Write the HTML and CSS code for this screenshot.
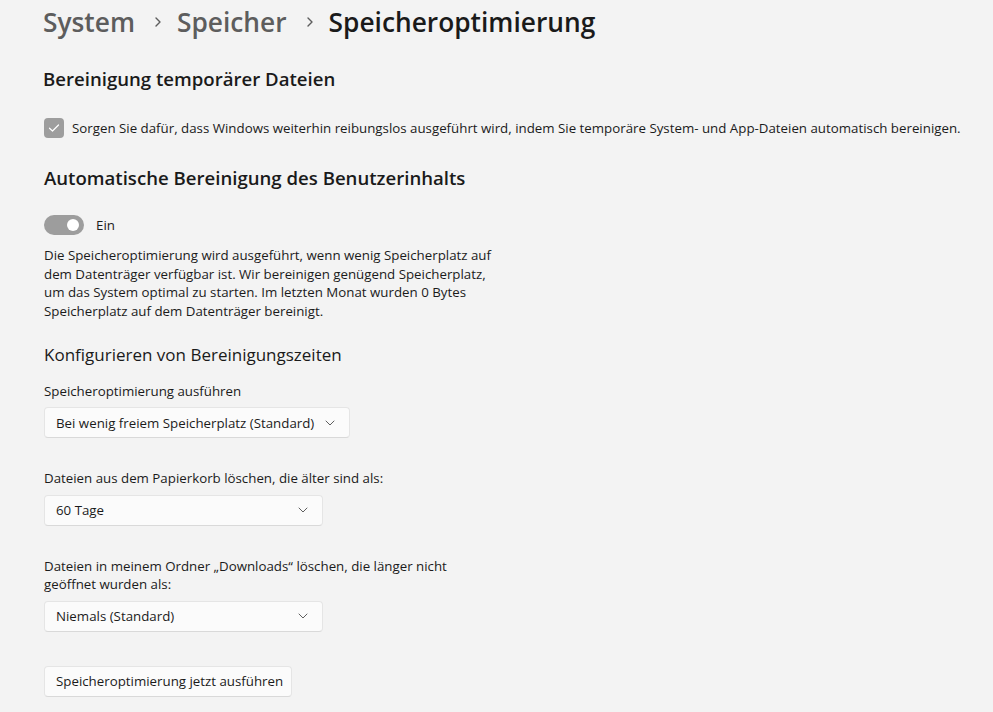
FILE: index.html
```html
<!DOCTYPE html>
<html lang="de">
<head>
<meta charset="utf-8">
<link rel="stylesheet" href="styles.css">
</head>
<body>
<div class="page">
  <h1 class="crumbs">
    <span class="crumb-muted">System</span>
    <svg class="sep" width="10" height="12" viewBox="0 0 10 12"><path d="M3 2 L7 6 L3 10" fill="none" stroke="#5d5d5d" stroke-width="1.4" stroke-linecap="round" stroke-linejoin="round"/></svg>
    <span class="crumb-muted">Speicher</span>
    <svg class="sep" width="10" height="12" viewBox="0 0 10 12"><path d="M3 2 L7 6 L3 10" fill="none" stroke="#5d5d5d" stroke-width="1.4" stroke-linecap="round" stroke-linejoin="round"/></svg>
    <span class="crumb-current">Speicheroptimierung</span>
  </h1>

  <h2 class="section-title first">Bereinigung temporärer Dateien</h2>
  <label class="check-row">
    <span class="checkbox"><svg width="12" height="10" viewBox="0 0 12 10"><path d="M1.5 5.2 L4.5 8 L10.5 2" fill="none" stroke="#fff" stroke-width="1.2" stroke-linecap="round" stroke-linejoin="round"/></svg></span>
    <span class="check-text">Sorgen Sie dafür, dass Windows weiterhin reibungslos ausgeführt wird, indem Sie temporäre System- und App-Dateien automatisch bereinigen.</span>
  </label>

  <h2 class="section-title second">Automatische Bereinigung des Benutzerinhalts</h2>
  <div class="toggle-row">
    <span class="toggle"><span class="knob"></span></span>
    <span class="toggle-label">Ein</span>
  </div>
  <p class="desc">Die Speicheroptimierung wird ausgeführt, wenn wenig Speicherplatz auf dem Datenträger verfügbar ist. Wir bereinigen genügend Speicherplatz, um das System optimal zu starten. Im letzten Monat wurden 0 Bytes Speicherplatz auf dem Datenträger bereinigt.</p>

  <h3 class="sub-title">Konfigurieren von Bereinigungszeiten</h3>

  <div class="field field-first">
    <div class="field-label">Speicheroptimierung ausführen</div>
    <div class="select select-wide"><span>Bei wenig freiem Speicherplatz (Standard)</span><svg class="chev" width="10" height="6" viewBox="0 0 10 6"><path d="M1 1 L5 5 L9 1" fill="none" stroke="#5f5f5f" stroke-width="1" stroke-linecap="round" stroke-linejoin="round"/></svg></div>
  </div>

  <div class="field">
    <div class="field-label">Dateien aus dem Papierkorb löschen, die älter sind als:</div>
    <div class="select select-narrow"><span>60 Tage</span><svg class="chev" width="10" height="6" viewBox="0 0 10 6"><path d="M1 1 L5 5 L9 1" fill="none" stroke="#5f5f5f" stroke-width="1" stroke-linecap="round" stroke-linejoin="round"/></svg></div>
  </div>

  <div class="field">
    <div class="field-label">Dateien in meinem Ordner „Downloads“ löschen, die länger nicht geöffnet wurden als:</div>
    <div class="select select-narrow"><span>Niemals (Standard)</span><svg class="chev" width="10" height="6" viewBox="0 0 10 6"><path d="M1 1 L5 5 L9 1" fill="none" stroke="#5f5f5f" stroke-width="1" stroke-linecap="round" stroke-linejoin="round"/></svg></div>
  </div>

  <button class="btn">Speicheroptimierung jetzt ausführen</button>
</div>
</body>
</html>
```

FILE: styles.css
```css
* { box-sizing: border-box; }
html, body { margin: 0; padding: 0; }
body {
  background: #f3f3f3;
  font-family: "Open Sans", "Noto Sans", sans-serif;
  color: #1b1b1b;
  width: 993px;
  height: 712px;
  overflow: hidden;
}
.page {
  padding: 4px 0 0 43px;
  display: flex;
  flex-direction: column;
  align-items: flex-start;
}
.crumbs {
  margin: 0;
  display: flex;
  align-items: center;
  font-size: 26.3px;
  font-weight: 600;
  line-height: 36px;
  height: 36px;
}
.crumb-muted { color: #5d5d5d; }
.crumb-current { color: #1a1a1a; }
.sep { margin: 0 14px 0 18px; }
.section-title {
  margin: 0;
  font-size: 18.6px;
  font-weight: 600;
  line-height: 26px;
  color: #1a1a1a;
}
.section-title.first { margin-top: 26px; }
.section-title.second { margin-top: 27px; margin-left: 1px; }
.check-row {
  display: flex;
  align-items: center;
  gap: 8px;
  margin-top: 26px;
  margin-left: 1px;
}
.checkbox {
  width: 20px;
  height: 20px;
  border-radius: 4px;
  background: #9d9d9d;
  display: flex;
  align-items: center;
  justify-content: center;
}
.check-text, .toggle-label, .desc, .field-label, .select, .btn {
  font-size: 13.3px;
  color: #1b1b1b;
}
.toggle-row {
  display: flex;
  align-items: center;
  gap: 12px;
  margin-top: 24px;
  margin-left: 1px;
}
.toggle {
  width: 40px;
  height: 20px;
  border-radius: 10px;
  background: #9d9d9d;
  display: flex;
  align-items: center;
  justify-content: flex-end;
  padding-right: 5px;
}
.knob {
  width: 12px;
  height: 12px;
  border-radius: 50%;
  background: #fff;
}
.desc {
  margin: 11px 0 0 1px;
  width: 452px;
  line-height: 18.7px;
}
.sub-title {
  margin: 22px 0 0 1px;
  font-size: 17px;
  font-weight: 400;
  line-height: 24px;
  color: #1a1a1a;
}
.field {
  margin-left: 1px;
  display: flex;
  flex-direction: column;
  align-items: flex-start;
}
.field-first { margin-top: 15px; }
.field + .field { margin-top: 31px; }
.field-label {
  line-height: 18.5px;
  width: 420px;
  margin-bottom: 7px;
}
.select {
  height: 31px;
  background: #fbfbfb;
  border: 1px solid #e5e5e5;
  border-bottom-color: #d9d9d9;
  border-radius: 4px;
  display: flex;
  align-items: center;
  justify-content: space-between;
  padding: 0 14px 0 11px;
}
.select-wide { width: 306px; }
.select-narrow { width: 279px; }
.btn {
  margin: 34px 0 0 1px;
  height: 31px;
  width: 248px;
  background: #fbfbfb;
  border: 1px solid #e5e5e5;
  border-bottom-color: #d9d9d9;
  border-radius: 4px;
  font-family: inherit;
  padding: 0 11px;
  text-align: left;
  white-space: nowrap;
}
```
